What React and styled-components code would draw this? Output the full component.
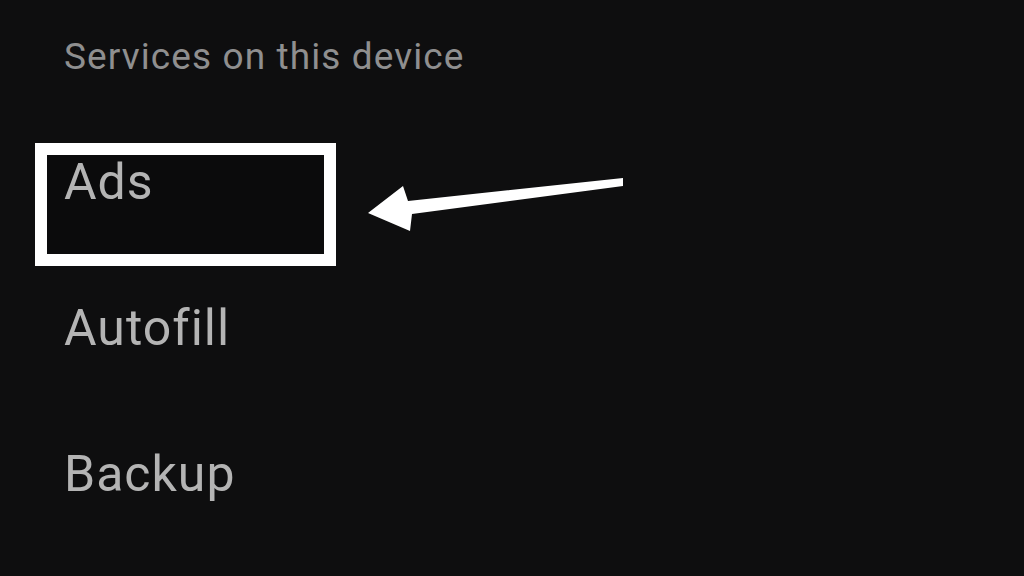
import React from 'react';
import styled, { createGlobalStyle } from 'styled-components';

const GlobalStyle = createGlobalStyle`
  html, body {
    margin: 0;
    padding: 0;
    background: #0e0e0f;
  }
  body {
    font-family: Roboto, "Liberation Sans", sans-serif;
  }
`;

const Screen = styled.div`
  width: 1024px;
  height: 576px;
  overflow: hidden;
  background: #0e0e0f;
  padding: 38px 0 0 35px;
  box-sizing: border-box;
`;

const SectionTitle = styled.div`
  margin-left: 29px;
  font-size: 37px;
  line-height: 1;
  letter-spacing: 1.1px;
  color: #8f8f8f;
  margin-bottom: 68px;
`;

const List = styled.div`
  display: flex;
  flex-direction: column;
  gap: 23px;
`;

const Row = styled.div`
  display: flex;
  align-items: flex-start;
`;

const Item = styled.div`
  width: 301px;
  height: 123px;
  box-sizing: border-box;
  border: 12px solid ${(p) => (p.$highlight ? '#ffffff' : 'transparent')};
  background: ${(p) => (p.$highlight ? '#0b0b0c' : 'transparent')};
  padding: 2px 0 0 17px;
  font-size: 50px;
  line-height: 1;
  letter-spacing: 1px;
  color: #b4b4b4;
`;

const Arrow = () => (
  <svg width="300" height="123" viewBox="0 0 300 123">
    <polygon
      points="32,70 67,43 72,58 287,35 287,43 76,71 74,88"
      fill="#ffffff"
    />
  </svg>
);

const items = ['Ads', 'Autofill', 'Backup'];

const App = () => (
  <>
    <GlobalStyle />
    <Screen>
      <SectionTitle>Services on this device</SectionTitle>
      <List>
        {items.map((name, i) => (
          <Row key={name}>
            <Item $highlight={i === 0}>{name}</Item>
            {i === 0 && <Arrow />}
          </Row>
        ))}
      </List>
    </Screen>
  </>
);

export default App;
